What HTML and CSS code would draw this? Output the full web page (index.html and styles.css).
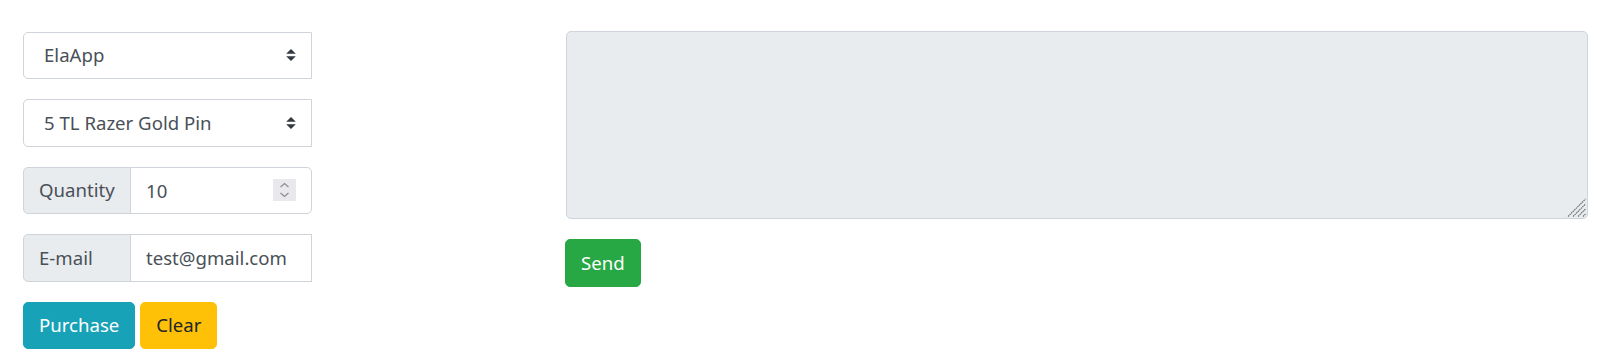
FILE: index.html
```html
<!DOCTYPE html>
<html lang="en">
<head>
<meta charset="utf-8">
<title>Purchase</title>
<link rel="stylesheet" href="styles.css">
</head>
<body>
<div class="page">
  <form class="order">
    <div class="field">
      <select class="picker">
        <option>ElaApp</option>
      </select>
    </div>
    <div class="field">
      <select class="picker">
        <option>5 TL Razer Gold Pin</option>
      </select>
    </div>
    <div class="field group">
      <span class="addon">Quantity</span>
      <div class="spin-wrap">
        <input class="control control-num" type="text" value="10">
        <span class="spinner">
          <svg viewBox="0 0 23 22" width="23" height="22">
            <path d="M7.5 8 L11.5 4.5 L15.5 8" fill="none" stroke="#8a8d91" stroke-width="1.2"/>
            <path d="M7.5 14 L11.5 17.5 L15.5 14" fill="none" stroke="#8a8d91" stroke-width="1.2"/>
          </svg>
        </span>
      </div>
    </div>
    <div class="field group">
      <span class="addon">E-mail</span>
      <input class="control control-mail" type="text" value="test@gmail.com">
    </div>
    <div class="actions">
      <button type="button" class="btn btn-info">Purchase</button>
      <button type="button" class="btn btn-warning">Clear</button>
    </div>
  </form>
  <div class="output">
    <div class="log-wrap">
      <textarea class="log" readonly></textarea>
      <svg class="grip" viewBox="0 0 19 19" width="19" height="19">
        <g stroke="#6b6b6b" stroke-width="1.1" stroke-dasharray="1.6 0.6">
          <line x1="1" y1="18.5" x2="18.5" y2="1"/>
          <line x1="6" y1="18.5" x2="18.5" y2="6"/>
          <line x1="11" y1="18.5" x2="18.5" y2="11"/>
          <line x1="16" y1="18.5" x2="18.5" y2="16"/>
        </g>
      </svg>
    </div>
    <div class="actions">
      <button type="button" class="btn btn-success">Send</button>
    </div>
  </div>
</div>
</body>
</html>
```
FILE: styles.css
```css
html, body {
  margin: 0;
  padding: 0;
  background: #fff;
}
body {
  font-family: "Noto Sans", "Open Sans", sans-serif;
  font-size: 18.6px;
  line-height: 1.5;
  color: #495057;
}
.page {
  display: flex;
  align-items: flex-start;
  padding: 31px 12px 0 23px;
}
.order {
  width: 289px;
  flex: none;
  margin: 0;
  padding-top: 0.5px;
}
.output {
  flex: 1;
  margin-left: 253px;
  min-width: 0;
}
.field {
  margin-bottom: 20px;
  height: 47.5px;
}
.picker {
  -webkit-appearance: none;
  appearance: none;
  display: block;
  width: 100%;
  height: 47.5px;
  box-sizing: border-box;
  margin: 0;
  padding: 7px 40px 7px 20px;
  font: inherit;
  color: #495057;
  background-color: #fff;
  background-image: url("data:image/svg+xml,%3csvg xmlns='http://www.w3.org/2000/svg' width='4' height='5' viewBox='0 0 4 5'%3e%3cpath fill='%23343a40' d='M2 0L0 2h4zm0 5L0 3h4z'/%3e%3c/svg%3e");
  background-repeat: no-repeat;
  background-position: right 15px center;
  background-size: 10px 12px;
  border: 1px solid #ced4da;
  border-radius: 5px 0 0 5px;
  outline: none;
}
.group {
  display: flex;
}
.addon {
  display: flex;
  align-items: center;
  box-sizing: border-box;
  width: 108px;
  flex: none;
  height: 47.5px;
  padding: 0 15px;
  background: #e9ecef;
  border: 1px solid #ced4da;
  border-radius: 5px 0 0 5px;
  white-space: nowrap;
}
.control {
  display: block;
  flex: 1;
  min-width: 0;
  width: 100%;
  height: 47.5px;
  box-sizing: border-box;
  margin: 0 0 0 -1px;
  padding: 7px 15px;
  font: inherit;
  color: #495057;
  background: #fff;
  border: 1px solid #ced4da;
  outline: none;
}
.spin-wrap {
  position: relative;
  flex: 1;
  display: flex;
  min-width: 0;
}
.control-num {
  border-radius: 0 5px 5px 0;
}
.control-mail {
  border-radius: 0;
}
.spinner {
  position: absolute;
  right: 16px;
  top: 12px;
  width: 23px;
  height: 22px;
  background: #e9e9ed;
  display: block;
}
.spinner svg {
  display: block;
}
.actions {
  display: flex;
  gap: 5px;
}
.btn {
  font: inherit;
  height: 47.5px;
  box-sizing: border-box;
  padding: 7px 15px;
  border: 1px solid transparent;
  border-radius: 5px;
  cursor: pointer;
}
.btn-info {
  background: #17a2b8;
  border-color: #17a2b8;
  color: #fff;
}
.btn-warning {
  background: #ffc107;
  border-color: #ffc107;
  color: #212529;
}
.btn-success {
  background: #28a745;
  border-color: #28a745;
  color: #fff;
}
.log-wrap {
  position: relative;
  margin: 0 0 20px 1px;
}
.log {
  display: block;
  width: 100%;
  height: 188px;
  box-sizing: border-box;
  margin: 0;
  padding: 7px 15px;
  font: inherit;
  color: #495057;
  background: #e9ecef;
  border: 1px solid #ced4da;
  border-radius: 5px;
  resize: none;
  outline: none;
}
.grip {
  position: absolute;
  right: 2px;
  bottom: 2px;
  display: block;
  pointer-events: none;
}
```
